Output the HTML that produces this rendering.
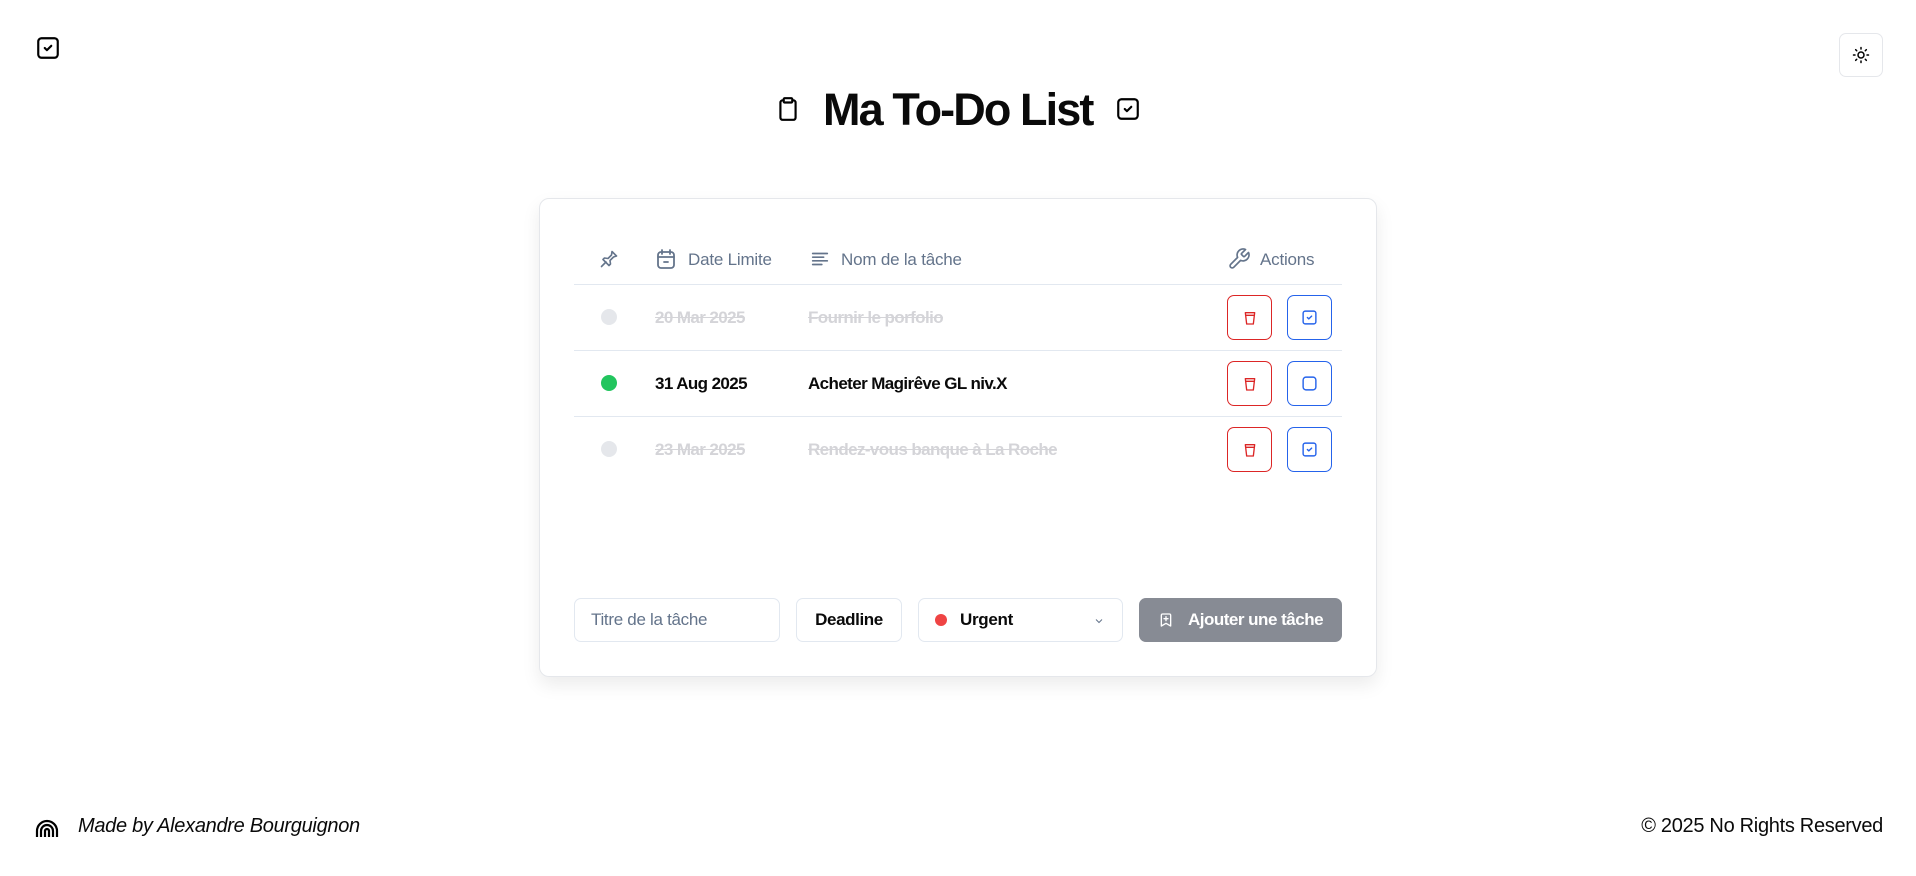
<!DOCTYPE html>
<html><head><meta charset="utf-8"><style>
*{box-sizing:border-box;margin:0;padding:0}
body{width:1916px;height:876px;background:#fff;font-family:"Liberation Sans",sans-serif;position:relative;overflow:hidden;color:#0a0a0a}
.a{position:absolute}
svg{display:block}
.hd{color:#64748b;font-size:17px;top:250px;letter-spacing:-0.2px}
.row{font-size:17px;font-weight:bold;letter-spacing:-0.6px}
.done{color:#d4d4d8;text-decoration:line-through}
.line{height:1px;background:#e2e8f0;left:574px;width:768px}
.btn{width:45px;height:45px;border-radius:7px;border:1px solid;display:flex;align-items:center;justify-content:center}
.del{border-color:#dc2626}
.chk{border-color:#2563eb}
.dot{width:16px;height:16px;border-radius:50%;left:601px}
.fld{top:598px;height:44px;border:1px solid #e2e8f0;border-radius:7px;font-size:17px;display:flex;align-items:center}
</style></head><body>

<svg class="a" style="left:35px;top:35px" width="26" height="26" viewBox="0 0 24 24" fill="none" stroke="#000" stroke-width="2" stroke-linecap="round" stroke-linejoin="round"><rect x="3" y="3" width="18" height="18" rx="3"/><path d="M9 12l2 2 4-4"/></svg>

<div class="a" style="left:1839px;top:33px;width:44px;height:44px;border:1px solid #e5e7eb;border-radius:7px;display:flex;align-items:center;justify-content:center">
<svg width="18" height="18" viewBox="0 0 24 24" fill="none" stroke="#000" stroke-width="2" stroke-linecap="round"><circle cx="12" cy="12" r="4"/><path d="M12 2v2M12 20v2M4.9 4.9l1.4 1.4M17.7 17.7l1.4 1.4M2 12h2M20 12h2M4.9 19.1l1.4-1.4M17.7 6.3l1.4-1.4"/></svg></div>

<svg class="a" style="left:775px;top:95px" width="26" height="28" viewBox="0 0 24 24" fill="none" stroke="#000" stroke-width="2" stroke-linecap="round" stroke-linejoin="round"><rect x="8" y="2" width="8" height="4" rx="1"/><path d="M16 4h1a2 2 0 0 1 2 2v14a2 2 0 0 1-2 2H7a2 2 0 0 1-2-2V6a2 2 0 0 1 2-2h1"/></svg>
<div class="a" style="left:823px;top:83px;font-size:45px;font-weight:bold;letter-spacing:-1.9px;line-height:54px">Ma To-Do List</div>
<svg class="a" style="left:1115px;top:96px" width="26" height="26" viewBox="0 0 24 24" fill="none" stroke="#000" stroke-width="2" stroke-linecap="round" stroke-linejoin="round"><rect x="3" y="3" width="18" height="18" rx="3"/><path d="M9 12l2 2 4-4"/></svg>

<div class="a" style="left:539px;top:198px;width:838px;height:479px;border:1px solid #e5e7eb;border-radius:10px;box-shadow:0 8px 18px rgba(0,0,0,0.08)"></div>

<svg class="a" style="left:597px;top:247px" width="24" height="24" viewBox="0 0 24 24" fill="none" stroke="#64748b" stroke-width="1.6" stroke-linecap="round" stroke-linejoin="round"><path d="M15 4.5l4.5 4.5-3 1-3.5 3.5.5 3.5-1.5 1.5-6-6L7.5 11l3.5.5L14.5 8z"/><path d="M9 15l-4.5 4.5"/></svg>
<svg class="a" style="left:654px;top:247px" width="24" height="24" viewBox="0 0 24 24" fill="none" stroke="#64748b" stroke-width="1.8" stroke-linecap="round"><rect x="4" y="5" width="16" height="16" rx="3"/><path d="M8 3v4M16 3v4M4 10h16M10 15h4"/></svg>
<div class="a hd" style="left:688px">Date Limite</div>
<svg class="a" style="left:809px;top:248px" width="22" height="22" viewBox="0 0 24 24" fill="none" stroke="#64748b" stroke-width="1.8" stroke-linecap="round"><path d="M4 6h16M4 10h12M4 14h16M4 18h10"/></svg>
<div class="a hd" style="left:841px">Nom de la tâche</div>
<svg class="a" style="left:1227px;top:247px" width="24" height="24" viewBox="0 0 24 24" fill="none" stroke="#64748b" stroke-width="1.7" stroke-linecap="round" stroke-linejoin="round"><path d="M14.7 6.3a1 1 0 0 0 0 1.4l1.6 1.6a1 1 0 0 0 1.4 0l3.8-3.8a6 6 0 0 1-7.9 7.9l-6.9 6.9a2.1 2.1 0 0 1-3-3l6.9-6.9a6 6 0 0 1 7.9-7.9z"/></svg>
<div class="a hd" style="left:1260px">Actions</div>
<div class="a line" style="top:284px"></div>
<div class="a line" style="top:350px"></div>
<div class="a line" style="top:416px"></div>

<div class="a dot" style="top:309px;background:#e5e7eb"></div>
<div class="a row done" style="left:655px;top:308px">20 Mar 2025</div>
<div class="a row done" style="left:808px;top:308px">Fournir le porfolio</div>
<div class="a dot" style="top:375px;background:#22c55e"></div>
<div class="a row" style="left:655px;top:374px">31 Aug 2025</div>
<div class="a row" style="left:808px;top:374px">Acheter Magirêve GL niv.X</div>
<div class="a dot" style="top:441px;background:#e5e7eb"></div>
<div class="a row done" style="left:655px;top:440px">23 Mar 2025</div>
<div class="a row done" style="left:808px;top:440px">Rendez-vous banque à La Roche</div>

<div class="a btn del" style="left:1227px;top:295px"><svg width="16" height="16" viewBox="0 0 24 24" fill="none" stroke="#dc2626" stroke-width="2" stroke-linecap="round" stroke-linejoin="round"><path d="M5 4h14l-2 17H7z"/><path d="M5.5 8h13"/></svg></div>
<div class="a btn chk" style="left:1287px;top:295px"><svg width="17" height="17" viewBox="0 0 24 24" fill="none" stroke="#2563eb" stroke-width="2" stroke-linecap="round" stroke-linejoin="round"><rect x="3" y="3" width="18" height="18" rx="3"/><path d="M9 12l2 2 4-4"/></svg></div>
<div class="a btn del" style="left:1227px;top:361px"><svg width="16" height="16" viewBox="0 0 24 24" fill="none" stroke="#dc2626" stroke-width="2" stroke-linecap="round" stroke-linejoin="round"><path d="M5 4h14l-2 17H7z"/><path d="M5.5 8h13"/></svg></div>
<div class="a btn chk" style="left:1287px;top:361px"><svg width="17" height="17" viewBox="0 0 24 24" fill="none" stroke="#2563eb" stroke-width="2"><rect x="3" y="3" width="18" height="18" rx="4"/></svg></div>
<div class="a btn del" style="left:1227px;top:427px"><svg width="16" height="16" viewBox="0 0 24 24" fill="none" stroke="#dc2626" stroke-width="2" stroke-linecap="round" stroke-linejoin="round"><path d="M5 4h14l-2 17H7z"/><path d="M5.5 8h13"/></svg></div>
<div class="a btn chk" style="left:1287px;top:427px"><svg width="17" height="17" viewBox="0 0 24 24" fill="none" stroke="#2563eb" stroke-width="2" stroke-linecap="round" stroke-linejoin="round"><rect x="3" y="3" width="18" height="18" rx="3"/><path d="M9 12l2 2 4-4"/></svg></div>

<div class="a fld" style="left:574px;width:206px;padding-left:16px;color:#64748b;letter-spacing:-0.3px">Titre de la tâche</div>
<div class="a fld" style="left:796px;width:106px;justify-content:center;font-weight:bold;letter-spacing:-0.4px">Deadline</div>
<div class="a fld" style="left:918px;width:205px;padding-left:16px;font-weight:bold;letter-spacing:-0.3px"><span style="width:12px;height:12px;border-radius:50%;background:#ef4444;margin-right:13px"></span>Urgent<svg style="position:absolute;right:16px;top:16px" width="14" height="12" viewBox="0 0 24 24" fill="none" stroke="#64748b" stroke-width="2"><path d="M6 9l6 6 6-6"/></svg></div>
<div class="a fld" style="left:1139px;width:203px;background:#878b94;border-color:#878b94;color:#fff;font-weight:bold;justify-content:center;letter-spacing:-0.5px"><svg style="margin-right:14px" width="16" height="18" viewBox="0 0 24 24" fill="none" stroke="#fff" stroke-width="2" stroke-linecap="round" stroke-linejoin="round"><path d="M19 21l-7-4-7 4V5a2 2 0 0 1 2-2h10a2 2 0 0 1 2 2z"/><path d="M12 7v6M9 10h6"/></svg>Ajouter une tâche</div>

<svg class="a" style="left:35px;top:817px" width="24" height="22" viewBox="0 0 24 22" fill="none" stroke="#000" stroke-width="2.2"><path d="M2 20v-6a10 10 0 0 1 20 0v6"/><path d="M6 20v-6a6 6 0 0 1 12 0v6"/><path d="M10 20v-6a2 2 0 0 1 4 0v6"/></svg>
<div class="a" style="left:78px;top:815px;font-size:20px;font-style:italic;letter-spacing:-0.3px">Made by Alexandre Bourguignon</div>
<div class="a" style="right:33px;top:815px;font-size:20px;letter-spacing:-0.3px">© 2025 No Rights Reserved</div>
</body></html>
